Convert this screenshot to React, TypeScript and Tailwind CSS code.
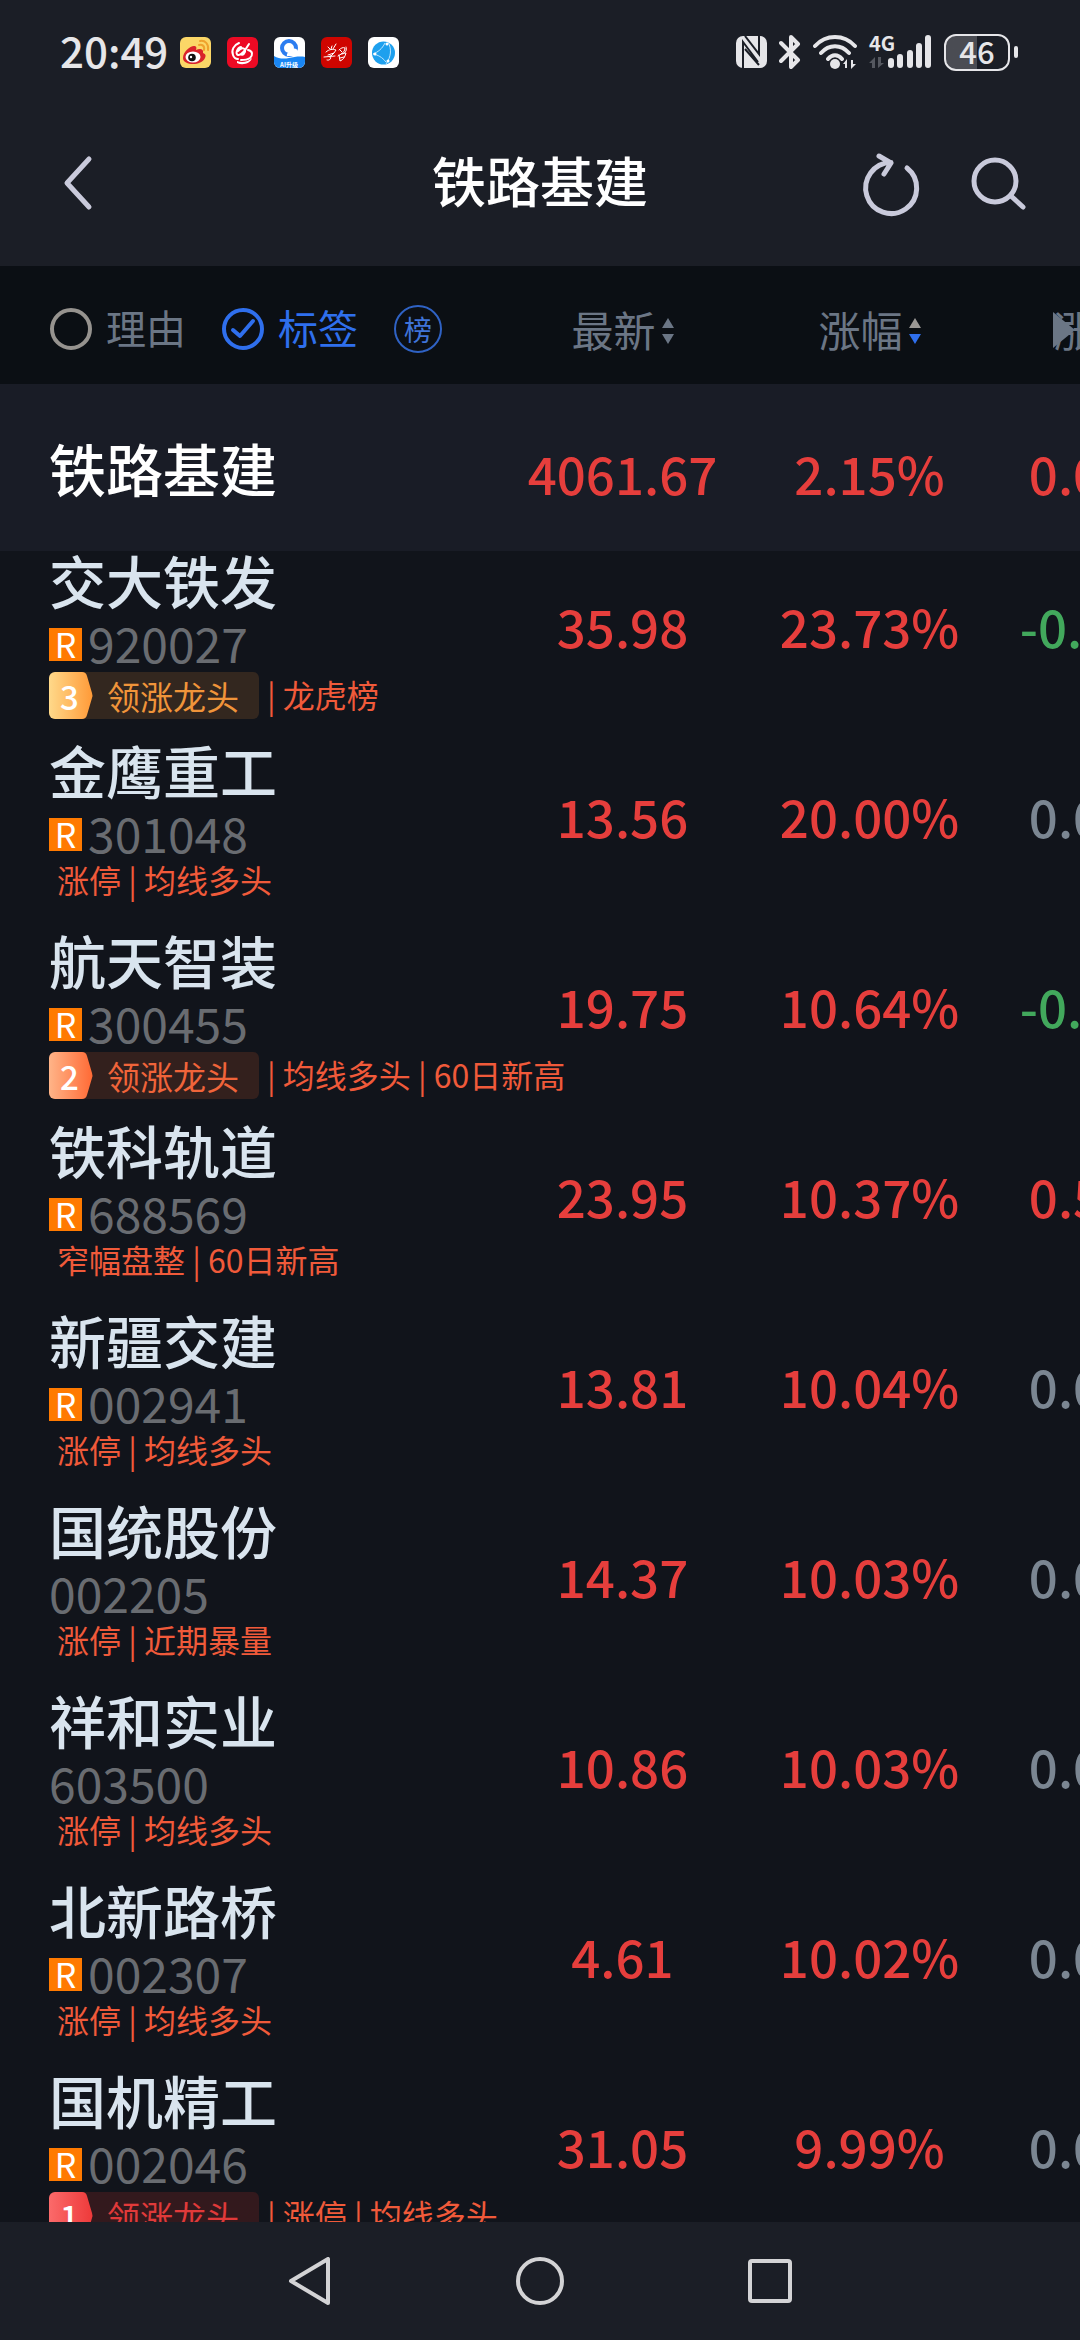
import React, { useState } from 'react';
import { clsx } from 'clsx';

interface Stock {
  name: string;
  code: string;
  margin: boolean;
  rank?: 1 | 2 | 3;
  tags: string[];
  price: string;
  change: string;
  speed: string;
}

const stocks: Stock[] = [
  { name: '交大铁发', code: '920027', margin: true, rank: 3, tags: ['龙虎榜'], price: '35.98', change: '23.73%', speed: '-0.03%' },
  { name: '金鹰重工', code: '301048', margin: true, tags: ['涨停', '均线多头'], price: '13.56', change: '20.00%', speed: '0.00%' },
  { name: '航天智装', code: '300455', margin: true, rank: 2, tags: ['均线多头', '60日新高'], price: '19.75', change: '10.64%', speed: '-0.05%' },
  { name: '铁科轨道', code: '688569', margin: true, tags: ['窄幅盘整', '60日新高'], price: '23.95', change: '10.37%', speed: '0.55%' },
  { name: '新疆交建', code: '002941', margin: true, tags: ['涨停', '均线多头'], price: '13.81', change: '10.04%', speed: '0.00%' },
  { name: '国统股份', code: '002205', margin: false, tags: ['涨停', '近期暴量'], price: '14.37', change: '10.03%', speed: '0.00%' },
  { name: '祥和实业', code: '603500', margin: false, tags: ['涨停', '均线多头'], price: '10.86', change: '10.03%', speed: '0.00%' },
  { name: '北新路桥', code: '002307', margin: true, tags: ['涨停', '均线多头'], price: '4.61', change: '10.02%', speed: '0.00%' },
  { name: '国机精工', code: '002046', margin: true, rank: 1, tags: ['涨停', '均线多头'], price: '31.05', change: '9.99%', speed: '0.00%' },
];

const rankStyles = {
  1: { chip: 'bg-[#33191d] text-[#e03a3a]', from: '#fb6a6a', to: '#ee3a3a' },
  2: { chip: 'bg-[#33201d] text-[#f0643a]', from: '#ffb488', to: '#ff6a35' },
  3: { chip: 'bg-[#33271f] text-[#f0943a]', from: '#ffd98a', to: '#ff9a38' },
};

const speedColor = (value: string) => {
  if (value.startsWith('-')) return 'text-[#42a85c]';
  return parseFloat(value) === 0 ? 'text-[#7b8692]' : 'text-[#e63e3c]';
};

const StatusBar = () => (
  <div className="flex h-24 shrink-0 items-center justify-between pt-2 pr-[62px] pl-[60px] text-[#e6e6e9]">
    <div className="flex items-center gap-3">
      <span className="pb-1 text-[42px] leading-none font-medium">20:49</span>
      <div className="flex gap-4">
        {/* Weibo */}
        <svg className="size-[31px]" viewBox="0 0 31 31">
          <rect width="31" height="31" rx="6" fill="#fbd767" />
          <path d="M3 21c0-6 7-12 11-12 2 0 3 1 2 4 4-2 8-1 7 3 3 1 3 3 2 5-2 4-7 6-12 6S3 25 3 21z" fill="#d9232a" />
          <ellipse cx="13" cy="20" rx="7.5" ry="5.5" fill="#fff" />
          <circle cx="12" cy="20.5" r="3.8" fill="#111" />
          <circle cx="11" cy="20" r="1.2" fill="#fff" />
          <path d="M19 8c3-1 6 1 5 5M20 4c5-1 9 3 8 9" fill="none" stroke="#efa22c" strokeWidth="2" strokeLinecap="round" />
        </svg>
        {/* News client */}
        <svg className="size-[31px]" viewBox="0 0 31 31">
          <rect width="31" height="31" rx="6" fill="#ec0a24" />
          <path d="M12 6C7 8 4 13 6 18c1 3 3 4 5 4M14 10c-4 1-6 7-3 8 4 1 8-6 11-11M11 14c3-3 6-4 7-1s-3 6-4 4M21 13c5 1 5 5 2 8-3 2-6 2-9 2" fill="none" stroke="#fff" strokeWidth="2" strokeLinecap="round" />
          <path d="M10 24c5 2 11 1 15-3-1 5-9 8-15 5z" fill="#fff" />
        </svg>
        {/* Browser */}
        <svg className="size-[31px]" viewBox="0 0 31 31">
          <rect width="31" height="31" rx="6" fill="#fff" />
          <path d="M0 19c5 3 10 3 15 2s11-2 16-1v5a6 6 0 0 1-6 6H6a6 6 0 0 1-6-6z" fill="#1a86f3" />
          <circle cx="15" cy="11" r="7" fill="none" stroke="#2c7df0" strokeWidth="4" />
          <path d="M13 19a3 3 0 0 1 3-4 4 4 0 0 1 8 1 2 2 0 0 1 0 3z" fill="#fff" />
          <text x="15" y="30" fontSize="6" textAnchor="middle" fill="#fff" fontWeight="700">AI升级</text>
        </svg>
        {/* Study */}
        <svg className="size-[31px]" viewBox="0 0 31 31">
          <rect width="31" height="31" rx="6" fill="#cf0500" />
          <path d="M7 10l2 2M11 9l-1 3M15 7l-3 5M5 15c3-3 7-3 10-2l-2 3M7 18l6-2-4 4M3 20l11-1M9 18c2 3 0 6-3 5M18 13c2-2 4-3 6-2 0 3-2 5-4 6M19 13l2 2M25 10c1 3 0 5-3 7M17 19c3-2 5-3 8-3-1 4-3 7-6 8l-1-6M19 21l4-1" fill="none" stroke="#fff" strokeWidth="1" strokeLinecap="round" />
        </svg>
        {/* Network globe */}
        <svg className="size-[31px]" viewBox="0 0 31 31">
          <rect width="31" height="31" rx="6" fill="#fff" />
          <circle cx="15.5" cy="16" r="11.5" fill="#1ea0ee" />
          <path d="M20 5c4 7 3 15-2 22M5 17c5-2 9-5 12-11M5 17c5 1 9 3 13 8" fill="none" stroke="#bfe6ff" strokeWidth="1" />
          <circle cx="7" cy="17" r="1.5" fill="#fff" />
          <circle cx="19" cy="7" r="1.5" fill="#fff" />
          <circle cx="20" cy="24" r="1.5" fill="#fff" />
        </svg>
      </div>
    </div>

    <div className="flex items-center gap-3">
      {/* NFC */}
      <svg className="h-8 w-[31px]" viewBox="0 0 31 32">
        <rect width="31" height="32" rx="7" fill="currentColor" />
        <path d="M7 32V6l15 20M9 0l14 18V0M9 13l14 16" fill="none" stroke="#1b1e26" strokeWidth="2" />
      </svg>
      {/* Bluetooth */}
      <svg className="h-9 w-[22px]" viewBox="0 0 22 36" fill="none" stroke="currentColor" strokeWidth="4" strokeLinecap="round" strokeLinejoin="round">
        <path d="M2 9l17 17-7 7V3l7 7L2 27" />
      </svg>
      {/* Wifi */}
      <svg className="h-9 w-11" viewBox="0 0 44 36">
        <path d="M2 12c11-12 29-12 40 0M8 19c8-9 20-9 28 0M15 25c4-5 10-5 14 0" fill="none" stroke="currentColor" strokeWidth="4" strokeLinecap="round" />
        <circle cx="22" cy="30" r="5" fill="currentColor" />
        <path d="M30 30l4-5v9h-2v-4zM43 30l-5 5v-9h2v4z" fill="currentColor" />
      </svg>
      {/* Mobile signal */}
      <svg className="h-9 w-[63px] overflow-visible" viewBox="0 0 63 36">
        <text x="0" y="17" fontSize="20" fontWeight="700" fill="currentColor">4G</text>
        <path d="M0 29l6-6v11H3v-5zM15 29l-6 5V23h3v6z" fill="#555860" />
        <path d="M22 27v4M31 23v8M41 19v12M50 12v19M59 4v27" stroke="currentColor" strokeWidth="6" strokeLinecap="round" />
      </svg>
      {/* Battery */}
      <div className="flex items-center gap-1">
        <div className="flex h-[37px] w-[66px] items-center justify-center rounded-xl border-2 border-current bg-linear-to-r from-[#4a4c53] from-50% to-transparent to-50% pb-1 text-[31px] leading-none font-medium">
          46
        </div>
        <div className="h-3 w-1 rounded-full bg-current" />
      </div>
    </div>
  </div>
);

const TitleBar = () => (
  <header className="grid h-[170px] shrink-0 grid-cols-3 items-center px-12 text-[#c9cadb]">
    <button type="button" aria-label="返回" className="justify-self-start">
      <svg className="size-16" viewBox="0 0 64 64" fill="none" stroke="currentColor" strokeWidth="5" strokeLinecap="round" strokeLinejoin="round">
        <path d="M41 10L19 34l22 24" />
      </svg>
    </button>
    <h1 className="justify-self-center pb-0.5 text-[54px] leading-none font-medium whitespace-nowrap text-white">铁路基建</h1>
    <div className="flex gap-10 justify-self-end pr-1">
      <button type="button" aria-label="刷新">
        <svg className="size-16 overflow-visible" viewBox="0 0 64 64" fill="none" stroke="currentColor" strokeWidth="5" strokeLinecap="round" strokeLinejoin="round">
          <path d="M47 19A25.5 25.5 0 1 1 31 13.500M19 7l12 7-7 11" />
        </svg>
      </button>
      <button type="button" aria-label="搜索">
        <svg className="size-16" viewBox="0 0 64 64" fill="none" stroke="currentColor" strokeWidth="5" strokeLinecap="round">
          <circle cx="31" cy="32" r="21" />
          <path d="M47 47l12 11" />
        </svg>
      </button>
    </div>
  </header>
);

interface FilterProps {
  label: string;
  checked: boolean;
  onChange: () => void;
}

const Filter: React.FC<FilterProps> = ({ label, checked, onChange }) => (
  <label className={clsx('flex items-center gap-3.5 text-[40px] leading-none', checked ? 'text-[#2f6fed]' : 'text-[#6b7685]')}>
    <span className="relative flex">
      <input
        type="checkbox"
        checked={checked}
        onChange={onChange}
        className="size-[42px] appearance-none rounded-full border-4 border-[#96938f] checked:border-[#2f6fed]"
      />
      {checked && (
        <svg className="pointer-events-none absolute inset-0 size-[42px]" viewBox="0 0 42 42" fill="none" stroke="currentColor" strokeWidth="4" strokeLinecap="round" strokeLinejoin="round">
          <path d="M11 22l7 6 13-15" />
        </svg>
      )}
    </span>
    <span className="pb-1">{label}</span>
  </label>
);

const SortHeader: React.FC<{ label: string; descending?: boolean }> = ({ label, descending }) => (
  <button type="button" className="inline-flex items-center gap-1.5 text-[42px] leading-none whitespace-nowrap text-[#6b7685]">
    <span className="pb-1">{label}</span>
    <svg className="h-[26px] w-3" viewBox="0 0 12 26">
      <path d="M6 0l6 10H0z" fill={descending ? '#9b9895' : 'currentColor'} />
      <path d="M6 26l6-10H0z" fill={descending ? '#2f6fed' : 'currentColor'} />
    </svg>
  </button>
);

const LeaderChip: React.FC<{ rank: 1 | 2 | 3 }> = ({ rank }) => {
  const style = rankStyles[rank];
  return (
    <span className={clsx('flex h-[47px] shrink-0 items-center overflow-hidden rounded-md pr-5 text-[33px]', style.chip)}>
      <span className="relative mr-3.5 flex h-full w-11 items-center pl-[11px] font-medium text-white">
        <svg className="absolute inset-0 h-full w-11" viewBox="0 0 44 47">
          <defs>
            <linearGradient id={`rank-${rank}`}>
              <stop offset="0" stopColor={style.from} />
              <stop offset="1" stopColor={style.to} />
            </linearGradient>
          </defs>
          <path d="M0 0h33q4 0 5 4l5 17q1 3 0 5l-5 17q-1 4-5 4H0z" fill={`url(#rank-${rank})`} />
        </svg>
        <span className="relative">{rank}</span>
      </span>
      领涨龙头
    </span>
  );
};

const StockRow: React.FC<{ stock: Stock }> = ({ stock }) => (
  <tr className="h-[190px] align-top">
    <th scope="row" className="pl-[49px] text-left font-normal whitespace-nowrap">
      <div className="text-[57px] leading-[57px] font-medium text-[#d9e4ee]">{stock.name}</div>
      <div className="flex h-16 items-center gap-1.5 pt-1 text-[48px] leading-none text-[#696c71]">
        {stock.margin && (
          <span className="mt-1 flex size-[33px] items-center justify-center bg-[#ff7a00] text-[34px] leading-none text-white">R</span>
        )}
        {stock.code}
      </div>
      <div className="flex items-center text-[32px] leading-[34px] text-[#f05a3a]">
        {stock.rank && <LeaderChip rank={stock.rank} />}
        <span className={clsx('pl-2', stock.rank && 'pb-1')}>
          {stock.rank && '| '}
          {stock.tags.join(' | ')}
        </span>
      </div>
    </th>
    <td className="pt-[45px] leading-[60px] text-[#e63e3c]">{stock.price}</td>
    <td className="pt-[45px] leading-[60px] text-[#e63e3c]">{stock.change}</td>
    <td className={clsx('pt-[45px] leading-[60px]', speedColor(stock.speed))}>{stock.speed}</td>
  </tr>
);

const NavBar = () => (
  <nav className="mx-auto grid h-[118px] w-[64%] shrink-0 grid-cols-3 place-items-center text-[#d3d3d5]">
    <button type="button" aria-label="后退">
      <svg className="size-12" viewBox="0 0 48 48" fill="none" stroke="currentColor" strokeWidth="4" strokeLinejoin="round">
        <path d="M42 2v44L5 24z" />
      </svg>
    </button>
    <button type="button" aria-label="主页">
      <svg className="size-12" viewBox="0 0 48 48" fill="none" stroke="currentColor" strokeWidth="4">
        <circle cx="24" cy="24" r="22" />
      </svg>
    </button>
    <button type="button" aria-label="最近任务">
      <svg className="size-12" viewBox="0 0 48 48" fill="none" stroke="currentColor" strokeWidth="4">
        <rect x="4" y="4" width="40" height="40" rx="2" />
      </svg>
    </button>
  </nav>
);

export default function App() {
  const [showReason, setShowReason] = useState(false);
  const [showTags, setShowTags] = useState(true);

  return (
    <div className="flex h-screen flex-col bg-[#1b1e26] font-['Noto_Sans_CJK_SC',sans-serif]">
      <StatusBar />
      <TitleBar />

      <main className="min-h-0 flex-1 overflow-auto bg-[#11141b] [scrollbar-width:none]">
        <table className="w-[112.5%] table-fixed border-collapse text-center text-[51px] font-medium">
          <colgroup>
            <col />
            <col className="w-[247px]" />
            <col className="w-[247px]" />
            <col className="w-[222px]" />
          </colgroup>
          <thead>
            <tr className="h-[118px] bg-[#0b0f14]">
              <th className="pt-2 pl-[50px] font-normal">
                <div className="flex items-center gap-9 whitespace-nowrap">
                  <Filter label="理由" checked={showReason} onChange={() => setShowReason(!showReason)} />
                  <Filter label="标签" checked={showTags} onChange={() => setShowTags(!showTags)} />
                  <button type="button" className="flex size-12 items-center justify-center rounded-full border-2 border-[#2f62c4] text-[28px] leading-none text-[#3f74d8]">
                    榜
                  </button>
                </div>
              </th>
              <th className="font-normal"><SortHeader label="最新" /></th>
              <th className="font-normal"><SortHeader label="涨幅" descending /></th>
              <th className="font-normal">
                <span className="relative inline-flex">
                  <SortHeader label="涨速" />
                  {/* More columns to the right */}
                  <svg className="absolute top-1 left-0 h-9 w-[22px] text-[#6b7685]" viewBox="0 0 22 36" fill="currentColor">
                    <path d="M0 0l22 18L0 36z" />
                  </svg>
                </span>
              </th>
            </tr>
          </thead>
          <tbody>
            <tr className="h-[167px] bg-[#191c26] text-[#e63e3c]">
              <th scope="row" className="pl-[49px] text-left text-[57px] font-medium text-white">铁路基建</th>
              <td className="pt-3">4061.67</td>
              <td className="pt-3">2.15%</td>
              <td className="pt-3">0.04%</td>
            </tr>
            {stocks.map((stock) => (
              <StockRow key={stock.code} stock={stock} />
            ))}
          </tbody>
        </table>
      </main>

      <NavBar />
    </div>
  );
}
